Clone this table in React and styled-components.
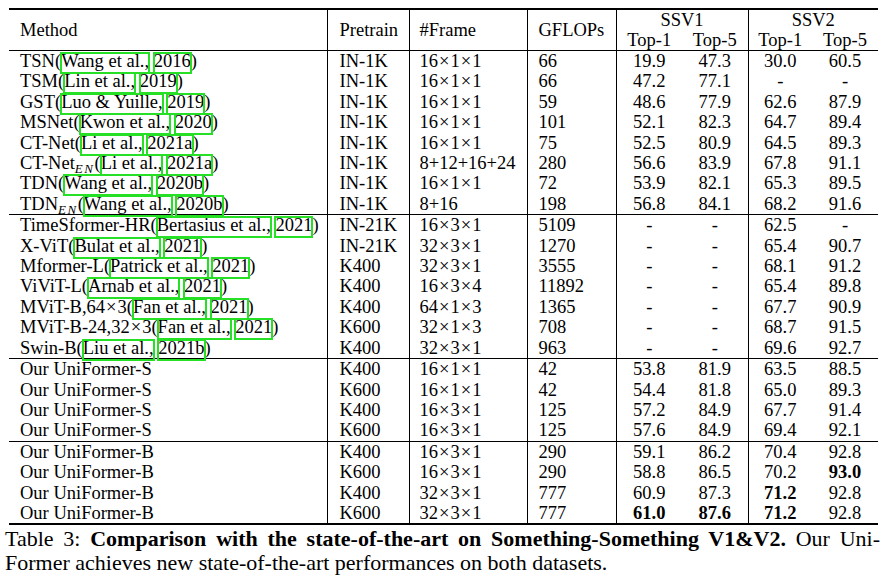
import React from 'react';
import styled, { createGlobalStyle } from 'styled-components';

const Global = createGlobalStyle`
  html, body { margin: 0; padding: 0; background: #fff; }
  body { font-family: "Liberation Serif", "Times New Roman", serif; color: #000; }
`;

const Page = styled.div`
  width: 885px;
  height: 586px;
  box-sizing: border-box;
  padding: 8px 5px 0 5px;
  overflow: hidden;
`;

const Table = styled.table`
  margin-left: 4px;
  width: 869px;
  border-collapse: collapse;
  table-layout: fixed;
  font-size: 18.5px;
  border-top: 2px solid #000;
  border-bottom: 2px solid #000;
`;

const Group = styled.tbody`
  border-top: 1px solid #000;
`;

const HeadCell = styled.th`
  font-weight: 400;
  height: 20px;
  line-height: 20px;
  padding: 0 0 0 ${p => p.$pad || 0}px;
  text-align: ${p => (p.$center ? 'center' : 'left')};
  border-left: ${p => (p.$rule ? '1px solid #000' : 'none')};
  white-space: nowrap;
  vertical-align: middle;
`;

const Cell = styled.td`
  height: 20.4px;
  line-height: 20.4px;
  padding: 0 0 0 ${p => p.$pad || 0}px;
  text-align: ${p => (p.$center ? 'center' : 'left')};
  border-left: ${p => (p.$rule ? '1px solid #000' : 'none')};
  font-weight: ${p => (p.$bold ? 700 : 400)};
  white-space: nowrap;
`;

const Cite = styled.span`
  position: relative;
  &::after {
    content: '';
    position: absolute;
    left: -1px;
    right: -1px;
    top: 1px;
    bottom: -3px;
    border: 2px solid #26e026;
    pointer-events: none;
  }
`;

const Sub = styled.sub`
  font-style: italic;
  font-size: 13px;
  letter-spacing: 1.5px;
  vertical-align: -4px;
  line-height: 0;
`;

const Op = styled.span`
  margin: 0 1px;
`;

const Caption = styled.div`
  margin-top: 2px;
  font-size: 22px;
  line-height: 24px;
`;

const CaptionLine = styled.div`
  white-space: nowrap;
  text-align: ${p => (p.$justify ? 'justify' : 'left')};
  text-align-last: ${p => (p.$justify ? 'justify' : 'auto')};
`;

const Strong = styled.b`
  font-weight: 700;
`;

const Dims = ({ v }) => {
  const parts = v.split('×');
  return (
    <>
      {parts.map((p, i) => (
        <React.Fragment key={i}>
          {i > 0 && <Op>×</Op>}
          {p}
        </React.Fragment>
      ))}
    </>
  );
};

const Name = ({ name, sub, cite }) => (
  <>
    <Dims v={name} />
    {sub && <Sub>{sub}</Sub>}
    {cite && (
      <>
        (<Cite>{cite[0]},</Cite> <Cite>{cite[1]}</Cite>)
      </>
    )}
  </>
);

const groups = [
  [
    ['TSN', null, ['Wang et al.', '2016'], 'IN-1K', '16×1×1', '66', '19.9', '47.3', '30.0', '60.5'],
    ['TSM', null, ['Lin et al.', '2019'], 'IN-1K', '16×1×1', '66', '47.2', '77.1', '-', '-'],
    ['GST', null, ['Luo & Yuille', '2019'], 'IN-1K', '16×1×1', '59', '48.6', '77.9', '62.6', '87.9'],
    ['MSNet', null, ['Kwon et al.', '2020'], 'IN-1K', '16×1×1', '101', '52.1', '82.3', '64.7', '89.4'],
    ['CT-Net', null, ['Li et al.', '2021a'], 'IN-1K', '16×1×1', '75', '52.5', '80.9', '64.5', '89.3'],
    ['CT-Net', 'EN', ['Li et al.', '2021a'], 'IN-1K', '8+12+16+24', '280', '56.6', '83.9', '67.8', '91.1'],
    ['TDN', null, ['Wang et al.', '2020b'], 'IN-1K', '16×1×1', '72', '53.9', '82.1', '65.3', '89.5'],
    ['TDN', 'EN', ['Wang et al.', '2020b'], 'IN-1K', '8+16', '198', '56.8', '84.1', '68.2', '91.6'],
  ],
  [
    ['TimeSformer-HR', null, ['Bertasius et al.', '2021'], 'IN-21K', '16×3×1', '5109', '-', '-', '62.5', '-'],
    ['X-ViT', null, ['Bulat et al.', '2021'], 'IN-21K', '32×3×1', '1270', '-', '-', '65.4', '90.7'],
    ['Mformer-L', null, ['Patrick et al.', '2021'], 'K400', '32×3×1', '3555', '-', '-', '68.1', '91.2'],
    ['ViViT-L', null, ['Arnab et al.', '2021'], 'K400', '16×3×4', '11892', '-', '-', '65.4', '89.8'],
    ['MViT-B,64×3', null, ['Fan et al.', '2021'], 'K400', '64×1×3', '1365', '-', '-', '67.7', '90.9'],
    ['MViT-B-24,32×3', null, ['Fan et al.', '2021'], 'K600', '32×1×3', '708', '-', '-', '68.7', '91.5'],
    ['Swin-B', null, ['Liu et al.', '2021b'], 'K400', '32×3×1', '963', '-', '-', '69.6', '92.7'],
  ],
  [
    ['Our UniFormer-S', null, null, 'K400', '16×1×1', '42', '53.8', '81.9', '63.5', '88.5'],
    ['Our UniFormer-S', null, null, 'K600', '16×1×1', '42', '54.4', '81.8', '65.0', '89.3'],
    ['Our UniFormer-S', null, null, 'K400', '16×3×1', '125', '57.2', '84.9', '67.7', '91.4'],
    ['Our UniFormer-S', null, null, 'K600', '16×3×1', '125', '57.6', '84.9', '69.4', '92.1'],
  ],
  [
    ['Our UniFormer-B', null, null, 'K400', '16×3×1', '290', '59.1', '86.2', '70.4', '92.8'],
    ['Our UniFormer-B', null, null, 'K600', '16×3×1', '290', '58.8', '86.5', '70.2', '*93.0'],
    ['Our UniFormer-B', null, null, 'K400', '32×3×1', '777', '60.9', '87.3', '*71.2', '92.8'],
    ['Our UniFormer-B', null, null, 'K600', '32×3×1', '777', '*61.0', '*87.6', '*71.2', '92.8'],
  ],
];

const Score = ({ v, rule }) => {
  const bold = v.startsWith('*');
  return (
    <Cell $center $rule={rule} $bold={bold}>
      {bold ? v.slice(1) : v}
    </Cell>
  );
};

export default function App() {
  return (
    <Page>
      <Global />
      <Table>
        <colgroup>
          <col style={{ width: 318 }} />
          <col style={{ width: 82 }} />
          <col style={{ width: 118 }} />
          <col style={{ width: 89 }} />
          <col style={{ width: 66 }} />
          <col style={{ width: 66 }} />
          <col style={{ width: 64 }} />
          <col style={{ width: 66 }} />
        </colgroup>
        <thead>
          <tr>
            <HeadCell rowSpan={2} $pad={11}>Method</HeadCell>
            <HeadCell rowSpan={2} $pad={12} $rule>Pretrain</HeadCell>
            <HeadCell rowSpan={2} $pad={10} $rule>#Frame</HeadCell>
            <HeadCell rowSpan={2} $pad={11} $rule>GFLOPs</HeadCell>
            <HeadCell colSpan={2} $center $rule>SSV1</HeadCell>
            <HeadCell colSpan={2} $center $rule>SSV2</HeadCell>
          </tr>
          <tr>
            <HeadCell $center $rule>Top-1</HeadCell>
            <HeadCell $center>Top-5</HeadCell>
            <HeadCell $center $rule>Top-1</HeadCell>
            <HeadCell $center>Top-5</HeadCell>
          </tr>
        </thead>
        {groups.map((rows, gi) => (
          <Group key={gi}>
            {rows.map((r, ri) => (
              <tr key={ri}>
                <Cell $pad={11}>
                  <Name name={r[0]} sub={r[1]} cite={r[2]} />
                </Cell>
                <Cell $pad={12} $rule>{r[3]}</Cell>
                <Cell $pad={10} $rule><Dims v={r[4]} /></Cell>
                <Cell $pad={11} $rule>{r[5]}</Cell>
                <Score v={r[6]} rule />
                <Score v={r[7]} />
                <Score v={r[8]} rule />
                <Score v={r[9]} />
              </tr>
            ))}
          </Group>
        ))}
      </Table>
      <Caption>
        <CaptionLine $justify>
          Table 3: <Strong>Comparison with the state-of-the-art on Something-Something V1&amp;V2.</Strong> Our Uni-
        </CaptionLine>
        <CaptionLine>Former achieves new state-of-the-art performances on both datasets.</CaptionLine>
      </Caption>
    </Page>
  );
}
